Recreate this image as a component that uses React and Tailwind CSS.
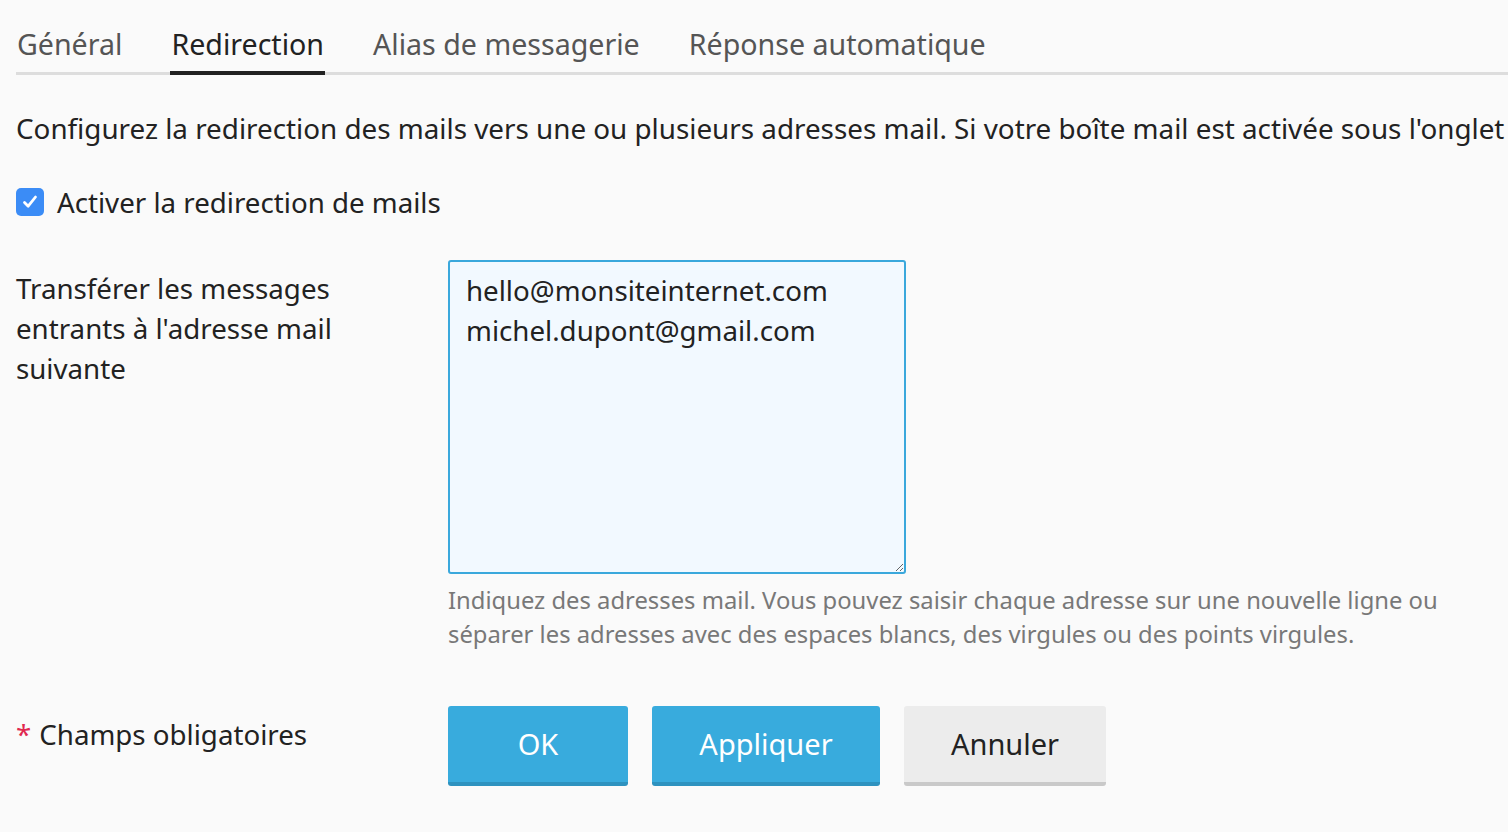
import React from "react";

export default function App() {
  const tabs = ["Général", "Redirection", "Alias de messagerie", "Réponse automatique"];
  return (
    <div className="min-h-screen w-[1508px] h-[832px] overflow-hidden bg-[#fafafa] text-[#222] font-['Noto_Sans',sans-serif]">
      <div className="ml-4 pt-[24px] flex gap-[47px] border-b-[3px] border-[#dddddd]">
        {tabs.map((t, i) => (
          <div
            key={t}
            className={
              "-mb-[3px] pb-[7px] border-b-4 text-[28.6px] leading-[40px] whitespace-nowrap px-[1px] " +
              (i === 1 ? "border-[#222] text-[#222]" : "border-transparent text-[#555]")
            }
          >
            {t}
          </div>
        ))}
      </div>

      <p className="ml-4 mt-[33px] text-[27.8px] leading-[40px] whitespace-nowrap">
        Configurez la redirection des mails vers une ou plusieurs adresses mail. Si votre boîte mail est activée sous l'onglet
      </p>

      <label className="ml-4 mt-[34px] flex items-center gap-[13px] text-[27.7px] leading-[40px]">
        <span className="w-[28px] h-[28px] rounded-[5px] bg-[#3b8cf6] flex items-center justify-center">
          <svg width="20" height="20" viewBox="0 0 20 20" fill="none">
            <path d="M4.5 10.5 L8.2 14.2 L15.5 5" stroke="white" strokeWidth="2.8" strokeLinecap="round" strokeLinejoin="round" />
          </svg>
        </span>
        <span>Activer la redirection de mails</span>
      </label>

      <div className="ml-4 mt-[38px] flex">
        <div className="w-[432px] pt-[8px] text-[27.7px] leading-[40px] text-[#222]">
          Transférer les messages
          <br />
          entrants à l'adresse mail
          <br />
          suivante
        </div>
        <div>
          <textarea
            className="block w-[458px] h-[314px] rounded-[3px] border-2 border-[#3aa8dc] bg-[#f2f9ff] px-[16px] py-[8px] text-[27.7px] leading-[40px] text-[#222] outline-none"
            defaultValue={"hello@monsiteinternet.com\nmichel.dupont@gmail.com"}
          />
          <div className="mt-[9px] text-[23.8px] leading-[34px] text-[#787878] whitespace-nowrap">
            Indiquez des adresses mail. Vous pouvez saisir chaque adresse sur une nouvelle ligne ou
            <br />
            séparer les adresses avec des espaces blancs, des virgules ou des points virgules.
          </div>
        </div>
      </div>

      <div className="ml-4 mt-[55px] flex">
        <div className="w-[432px] pt-[8px] text-[27.7px] leading-[40px]">
          <span className="text-[#e0284f] mr-[8px]">*</span>Champs obligatoires
        </div>
        <div className="flex gap-[24px]">
          <button className="w-[180px] h-[80px] rounded-[3px] bg-[#38abdd] border-b-4 border-[#2e92bf] text-white text-[29px]">
            OK
          </button>
          <button className="w-[228px] h-[80px] rounded-[3px] bg-[#38abdd] border-b-4 border-[#2e92bf] text-white text-[29px]">
            Appliquer
          </button>
          <button className="w-[202px] h-[80px] rounded-[3px] bg-[#ececec] border-b-4 border-[#c9c9c9] text-[#222] text-[29px]">
            Annuler
          </button>
        </div>
      </div>
    </div>
  );
}
